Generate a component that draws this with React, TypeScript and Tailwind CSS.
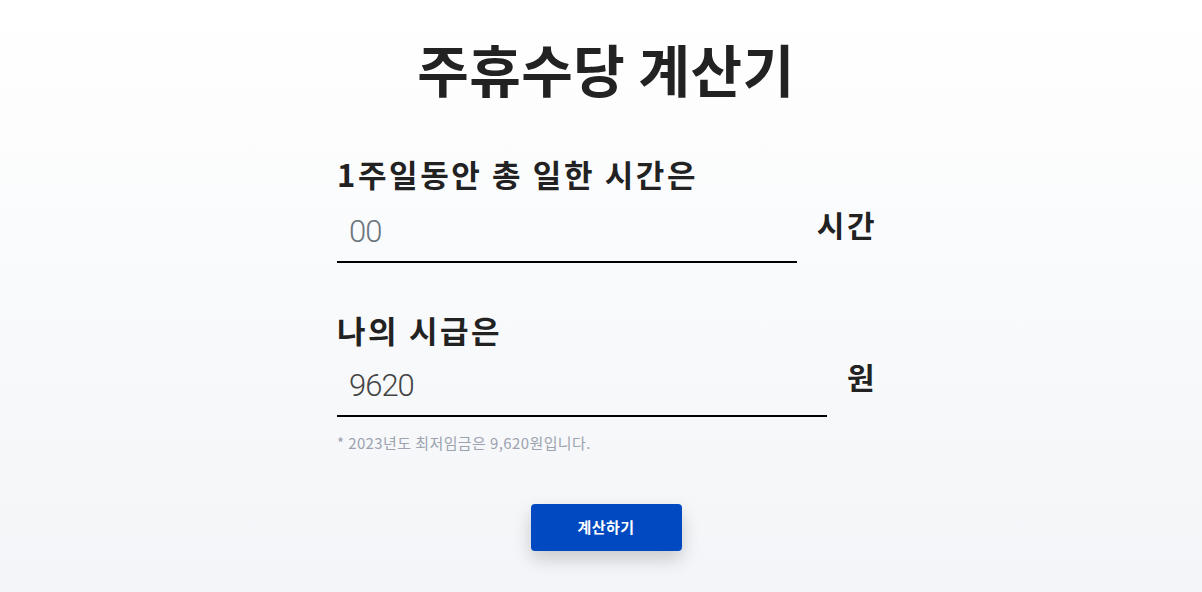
import { useState } from "react";

const font = { fontFamily: '"Noto Sans CJK KR", "Noto Sans", sans-serif' };
const numFont = { fontFamily: 'Roboto, "Liberation Sans", sans-serif' };

export default function App() {
  const [hours, setHours] = useState("");
  const [wage, setWage] = useState("9620");

  return (
    <div
      className="min-h-[592px] w-full bg-gradient-to-b from-white to-[#f3f5f8] text-[#222222]"
      style={font}
    >
      <div className="flex flex-col items-center pl-[10px] pt-[33px]">
        <h1 className="text-[56px] font-bold leading-[70px] tracking-[0.5px]">주휴수당 계산기</h1>

        <div className="mt-[51px] w-[538px]">
          {/* weekly hours */}
          <label className="block text-[31px] font-bold leading-[40px] tracking-[2.6px]">1주일동안 총 일한 시간은</label>
          <div className="mt-[7px] flex items-start gap-5">
            <input
              type="text"
              value={hours}
              onChange={(e) => setHours(e.target.value)}
              placeholder="00"
              className="h-[62px] min-w-0 flex-1 border-b-2 border-black bg-transparent pl-3 text-[31px] font-light tracking-[-1px] text-[#444] outline-none placeholder:text-[#6c757d]"
              style={numFont}
            />
            <span className="-mr-[2px] pt-[5px] text-[30px] font-bold leading-[36px] tracking-[2.5px]">시간</span>
          </div>

          {/* hourly wage */}
          <label className="mt-[47px] block text-[31px] font-bold leading-[40px] tracking-[2.6px]">나의 시급은</label>
          <div className="mt-[5px] flex items-start gap-5">
            <input
              type="text"
              value={wage}
              onChange={(e) => setWage(e.target.value)}
              className="h-[62px] min-w-0 flex-1 border-b-2 border-black bg-transparent pl-3 text-[31px] font-light tracking-[-1px] text-[#444] outline-none"
              style={numFont}
            />
            <span className="-mr-[2px] pt-[3px] text-[30px] font-bold leading-[36px] tracking-[2.5px]">원</span>
          </div>
          <p className="mt-[16px] text-[15px] leading-5 tracking-[0.4px] text-[#9ca3af]">* 2023년도 최저임금은 9,620원입니다.</p>
        </div>

        <button className="mt-[51px] h-[47px] w-[151px] rounded bg-[#0049c1] text-[15px] font-bold tracking-[0.5px] text-white shadow-[0_8px_18px_rgba(0,0,0,0.18)]">
          계산하기
        </button>
      </div>
    </div>
  );
}
